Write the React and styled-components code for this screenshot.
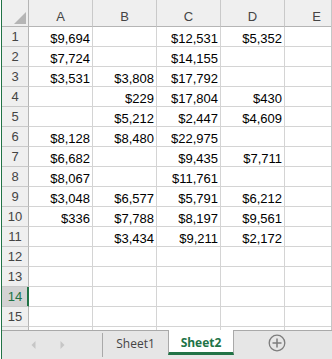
import styled, { createGlobalStyle } from 'styled-components';

const Global = createGlobalStyle`
    html, body {
        margin: 0;
        padding: 0;
        background: #ffffff;
    }
    * {
        box-sizing: border-box;
    }
`

const columns = ['A', 'B', 'C', 'D', 'E'];

const data = [
    ['$9,694', '', '$12,531', '$5,352', ''],
    ['$7,724', '', '$14,155', '', ''],
    ['$3,531', '$3,808', '$17,792', '', ''],
    ['', '$229', '$17,804', '$430', ''],
    ['', '$5,212', '$2,447', '$4,609', ''],
    ['$8,128', '$8,480', '$22,975', '', ''],
    ['$6,682', '', '$9,435', '$7,711', ''],
    ['$8,067', '', '$11,761', '', ''],
    ['$3,048', '$6,577', '$5,791', '$6,212', ''],
    ['$336', '$7,788', '$8,197', '$9,561', ''],
    ['', '$3,434', '$9,211', '$2,172', ''],
    ['', '', '', '', ''],
    ['', '', '', '', ''],
    ['', '', '', '', ''],
    ['', '', '', '', ''],
    ['', '', '', '', ''],
];

const activeRow = 14;
const visibleRows = 15;

function App() {
    return (
        <Window>
            <Global />
            <Frame>
                <Sheet>
                    <Grid>
                        <Corner>
                            <svg width="12" height="12" viewBox="0 0 12 12">
                                <polygon points="12,0 12,12 0,12" fill="#b5b5b5" />
                            </svg>
                        </Corner>
                        {columns.map((c) => (
                            <ColHeader key={c}>{c}</ColHeader>
                        ))}
                        {data.map((row, i) => [
                            <RowHeader key={'h' + i} $active={i + 1 === activeRow}>
                                {i < visibleRows ? i + 1 : ''}
                            </RowHeader>,
                            ...row.map((v, j) => <Cell key={i + '-' + j}>{v}</Cell>),
                        ])}
                    </Grid>
                </Sheet>
                <TabBar>
                    <Nav>
                        <svg width="5" height="8" viewBox="0 0 5 8">
                            <polygon points="4.5,0 4.5,8 0.5,4" fill="#c6c6c6" />
                        </svg>
                        <svg width="5" height="8" viewBox="0 0 5 8">
                            <polygon points="0.5,0 0.5,8 4.5,4" fill="#c6c6c6" />
                        </svg>
                    </Nav>
                    <Tab>Sheet1</Tab>
                    <Tab $active>Sheet2</Tab>
                    <AddSheet>
                        <svg width="18" height="18" viewBox="0 0 18 18">
                            <circle cx="9" cy="9" r="7.8" fill="none" stroke="#7d7d7d" strokeWidth="1.3" />
                            <line x1="9" y1="4.5" x2="9" y2="13.5" stroke="#7d7d7d" strokeWidth="1.5" />
                            <line x1="4.5" y1="9" x2="13.5" y2="9" stroke="#7d7d7d" strokeWidth="1.5" />
                        </svg>
                    </AddSheet>
                </TabBar>
            </Frame>
        </Window>
    )
}

const Window = styled.div`
    width: 332px;
    height: 359px;
    padding-left: 1px;
    background: #ffffff;
    overflow: hidden;
`
const Frame = styled.div`
    display: flex;
    flex-direction: column;
    height: 100%;
    border-left: 1px solid #217346;
    font-family: "Liberation Sans", Arial, sans-serif;
    font-size: 13px;
    color: #000000;
`
const Sheet = styled.div`
    flex: 1;
    overflow: hidden;
    border-right: 1px solid #c6c6c6;
`
const Grid = styled.div`
    display: grid;
    grid-template-columns: 27px repeat(5, 64px);
    grid-template-rows: 27px;
    grid-auto-rows: 20px;
`
const HeaderBase = styled.div`
    display: flex;
    justify-content: center;
    align-items: flex-end;
    line-height: 15px;
    background: #efefef;
    color: #444444;
    border-right: 1px solid #c9c9c9;
    border-bottom: 1px solid #c9c9c9;
`
const Corner = styled(HeaderBase)`
    justify-content: flex-end;
    padding: 0 2px 2px 0;
    border-bottom-color: #b5b5b5;
    border-right-color: #b5b5b5;
`
const ColHeader = styled(HeaderBase)`
    padding-bottom: 2px;
    border-bottom-color: #b5b5b5;
`
const RowHeader = styled(HeaderBase)`
    padding-bottom: 2px;
    border-right-color: ${(p) => (p.$active ? '#217346' : '#b5b5b5')};
    background: ${(p) => (p.$active ? '#d3d3d3' : '#efefef')};
    color: ${(p) => (p.$active ? '#217346' : '#444444')};
    box-shadow: ${(p) => (p.$active ? 'inset -1px 0 0 #217346' : 'none')};
`
const Cell = styled.div`
    display: flex;
    justify-content: flex-end;
    align-items: flex-end;
    line-height: 15px;
    padding-right: 2px;
    border-right: 1px solid #d4d4d4;
    border-bottom: 1px solid #d4d4d4;
    white-space: nowrap;
`
const TabBar = styled.div`
    display: flex;
    height: 29px;
    flex-shrink: 0;
    background: #e6e6e6;
    border-top: 1px solid #a9a9a9;
    font-family: "Open Sans", "Noto Sans", sans-serif;
    font-size: 12px;
`
const Nav = styled.div`
    display: flex;
    align-items: center;
    gap: 24px;
    width: 101px;
    height: 24px;
    padding-left: 29px;
    border-right: 1px solid #a9a9a9;
    margin: 2px 0 4px;
`
const Tab = styled.div`
    display: flex;
    justify-content: center;
    align-items: center;
    width: ${(p) => (p.$active ? '66px' : '65px')};
    height: ${(p) => (p.$active ? '25px' : '24px')};
    margin-top: ${(p) => (p.$active ? '-1px' : '0')};
    padding-top: ${(p) => (p.$active ? '2px' : '0')};
    background: ${(p) => (p.$active ? '#ffffff' : 'transparent')};
    border-left: ${(p) => (p.$active ? '1px solid #a9a9a9' : 'none')};
    border-right: ${(p) => (p.$active ? '1px solid #a9a9a9' : 'none')};
    border-bottom: ${(p) => (p.$active ? '3px solid #217346' : 'none')};
    color: ${(p) => (p.$active ? '#217346' : '#444444')};
    font-weight: ${(p) => (p.$active ? 700 : 400)};
`
const AddSheet = styled.div`
    display: flex;
    align-items: center;
    justify-content: center;
    width: 86px;
    height: 24px;
`

export default App
